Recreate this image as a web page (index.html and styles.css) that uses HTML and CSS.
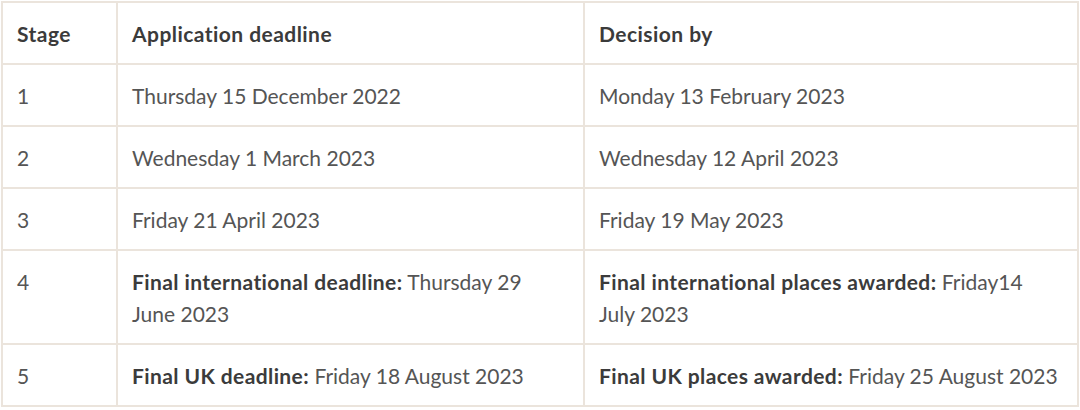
FILE: index.html
```html
<!DOCTYPE html>
<html>
<head>
<meta charset="utf-8">
<link rel="stylesheet" href="styles.css">
</head>
<body>
<table class="deadlines">
  <colgroup>
    <col class="c1"><col class="c2"><col class="c3">
  </colgroup>
  <thead>
    <tr><th>Stage</th><th>Application deadline</th><th>Decision by</th></tr>
  </thead>
  <tbody>
    <tr><td>1</td><td>Thursday 15 December 2022</td><td>Monday 13 February 2023</td></tr>
    <tr><td>2</td><td>Wednesday 1 March 2023</td><td>Wednesday 12 April 2023</td></tr>
    <tr><td>3</td><td>Friday 21 April 2023</td><td>Friday 19 May 2023</td></tr>
    <tr><td>4</td><td><strong>Final international deadline:</strong> Thursday 29 June 2023</td><td><strong>Final international places awarded:</strong> Friday14 July 2023</td></tr>
    <tr><td>5</td><td><strong>Final UK deadline:</strong> Friday 18 August 2023</td><td><strong>Final UK places awarded:</strong> Friday 25 August 2023</td></tr>
  </tbody>
</table>
</body>
</html>
```
FILE: styles.css
```css
html, body {
  margin: 0;
  padding: 0;
  background: #ffffff;
}
body {
  padding: 1px 0 0 1px;
  font-family: Lato, "Open Sans", sans-serif;
  font-size: 21px;
  color: #555555;
}
.deadlines {
  border-collapse: collapse;
  width: 1076px;
  table-layout: fixed;
}
.c1 { width: 115px; }
.c2 { width: 467px; }
.c3 { width: 494px; }
.deadlines th,
.deadlines td {
  border: 2px solid #ebe4dc;
  padding: 15px 14px 13px 14px;
  line-height: 32px;
  text-align: left;
  vertical-align: top;
}
.deadlines th {
  font-weight: 700;
  color: #3b3b3b;
  letter-spacing: 0.45px;
}
.deadlines strong {
  font-weight: 700;
  color: #3b3b3b;
  letter-spacing: 0.4px;
}
```
